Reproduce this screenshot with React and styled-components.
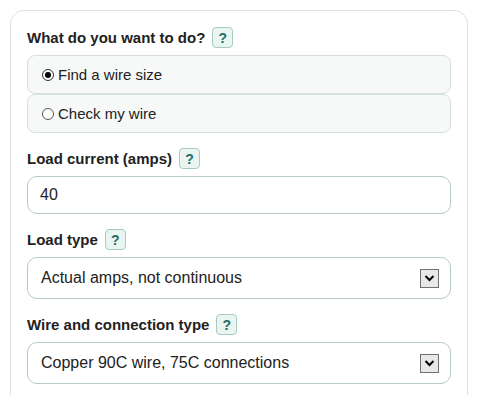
import React from 'react'
import styled, { createGlobalStyle } from 'styled-components'

const GlobalStyle = createGlobalStyle`
  body {
    margin: 0;
    background: #ffffff;
    font-family: "Liberation Sans", Arial, sans-serif;
    color: #222;
  }
`

const Card = styled.div`
  margin: 10px 0 0 10px;
  width: 458px;
  box-sizing: border-box;
  border: 1px solid #d8e4e1;
  border-radius: 14px;
  padding: 16px 16px 20px;
  background: #fff;
`

const Field = styled.div`
  margin-bottom: 15px;
`

const LabelRow = styled.div`
  display: flex;
  align-items: center;
  gap: 7px;
  height: 21px;
  margin-bottom: 7px;
`

const Label = styled.span`
  font-size: 15px;
  font-weight: bold;
  color: #222;
`

const Help = styled.span`
  display: inline-flex;
  align-items: center;
  justify-content: center;
  width: 21px;
  height: 21px;
  box-sizing: border-box;
  border: 1px solid #a8cbbf;
  border-radius: 4px;
  background: #eaf4f0;
  color: #1c6e68;
  font-size: 14px;
  font-weight: bold;
`

const Options = styled.div`
  display: flex;
  flex-direction: column;
`

const Option = styled.label`
  display: flex;
  align-items: center;
  height: 39px;
  box-sizing: border-box;
  padding-left: 14px;
  border: 1px solid #d5e0dd;
  border-radius: 8px;
  background: #f7f9f9;
  font-size: 15px;
  color: #222;
`

const Radio = styled.span`
  width: 12px;
  height: 12px;
  box-sizing: border-box;
  border-radius: 50%;
  border: 1px solid ${(p) => (p.$checked ? '#333' : '#555')};
  background: #fff;
  margin-right: 4px;
  display: flex;
  align-items: center;
  justify-content: center;
  &::after {
    content: '';
    width: 6px;
    height: 6px;
    border-radius: 50%;
    background: ${(p) => (p.$checked ? '#000' : 'transparent')};
  }
`

const TextInput = styled.input`
  display: block;
  width: 100%;
  height: 38px;
  box-sizing: border-box;
  border: 1px solid #b8c8c4;
  border-radius: 10px;
  padding: 0 12px;
  font-family: "Liberation Sans", Arial, sans-serif;
  font-size: 16px;
  color: #222;
  outline: none;
`

const Select = styled.div`
  display: flex;
  align-items: center;
  justify-content: space-between;
  height: 42px;
  box-sizing: border-box;
  border: 1px solid #b8c8c4;
  border-radius: 10px;
  padding: 0 11px 0 13px;
  font-size: 16px;
  color: #222;
`

const Arrow = styled.span`
  display: flex;
  align-items: center;
  justify-content: center;
  width: 19px;
  height: 19px;
  box-sizing: border-box;
  border: 1px solid #707070;
  background: #e8e8e8;
`

const Chevron = () => (
  <svg width="11" height="8" viewBox="0 0 11 8">
    <path d="M1.5 2 L5.5 6 L9.5 2" fill="none" stroke="#000" strokeWidth="2" />
  </svg>
)

const App = () => {
  return (
    <>
      <GlobalStyle />
      <Card>
        <Field>
          <LabelRow>
            <Label>What do you want to do?</Label>
            <Help>?</Help>
          </LabelRow>
          <Options>
            <Option>
              <Radio $checked />
              Find a wire size
            </Option>
            <Option>
              <Radio />
              Check my wire
            </Option>
          </Options>
        </Field>
        <Field>
          <LabelRow>
            <Label>Load current (amps)</Label>
            <Help>?</Help>
          </LabelRow>
          <TextInput defaultValue="40" />
        </Field>
        <Field>
          <LabelRow>
            <Label>Load type</Label>
            <Help>?</Help>
          </LabelRow>
          <Select>
            <span>Actual amps, not continuous</span>
            <Arrow><Chevron /></Arrow>
          </Select>
        </Field>
        <Field>
          <LabelRow>
            <Label>Wire and connection type</Label>
            <Help>?</Help>
          </LabelRow>
          <Select>
            <span>Copper 90C wire, 75C connections</span>
            <Arrow><Chevron /></Arrow>
          </Select>
        </Field>
      </Card>
    </>
  )
}

export default App
